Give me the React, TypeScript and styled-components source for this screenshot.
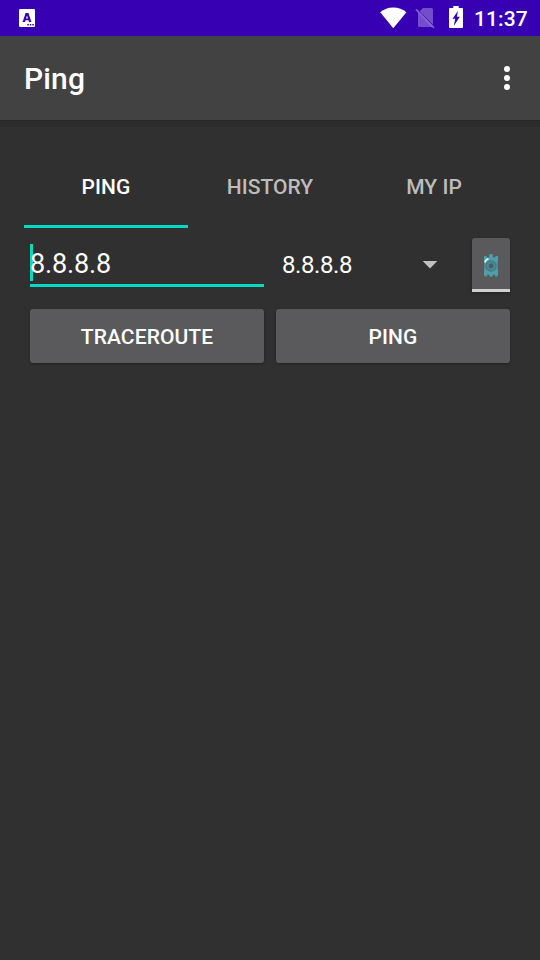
import React from "react";
import styled, { createGlobalStyle } from "styled-components";

const GlobalStyle = createGlobalStyle`
  * { box-sizing: border-box; }
  body { margin: 0; background: #303030; }
`;

const Screen = styled.div`
  display: flex;
  flex-direction: column;
  width: 540px;
  height: 960px;
  overflow: hidden;
  background: #303030;
  color: #fff;
  font-family: Roboto, sans-serif;
`;

const StatusBar = styled.header`
  display: flex;
  align-items: center;
  justify-content: space-between;
  height: 36px;
  padding: 0 12px 0 19px;
  background: #3700b3;
`;

const StatusIcons = styled.div`
  display: flex;
  align-items: center;
  height: 36px;
`;

const Clock = styled.span`
  width: 54px;
  margin-left: 11px;
  font-size: 21px;
  font-weight: 500;
  letter-spacing: 0.1px;
  line-height: 36px;
  padding-top: 1px;
  white-space: nowrap;
`;

const AppBar = styled.div`
  display: flex;
  flex: none;
  align-items: center;
  justify-content: space-between;
  height: 84px;
  padding: 0 30px 0 24px;
  background: #424242;
  box-shadow: 0 1px 0 #272727, 0 7px 0 #2c2c2c;
`;

const Title = styled.h1`
  margin: 0;
  padding-top: 2px;
  font-size: 30px;
  font-weight: 500;
  letter-spacing: 0.15px;
  line-height: 36px;
`;

const IconButton = styled.button`
  display: flex;
  padding: 0;
  border: 0;
  background: none;
`;

const Content = styled.main`
  padding: 24px;
`;

const Tabs = styled.nav`
  display: grid;
  grid-template-columns: repeat(3, 1fr);
`;

const Tab = styled.button<{ $active?: boolean }>`
  height: 84px;
  padding: 5px 0 0;
  border: 0;
  border-bottom: 3px solid ${(p) => (p.$active ? "#03dac5" : "transparent")};
  background: none;
  color: ${(p) => (p.$active ? "#fff" : "#bcbcbc")};
  font: 500 21px/24px Roboto, sans-serif;
  letter-spacing: 0.05px;
`;

const HostRow = styled.div`
  display: flex;
  align-items: flex-start;
  padding: 10px 6px 0;
  height: 75px;
`;

const HostField = styled.div`
  display: flex;
  width: 234px;
  height: 49px;
  padding-top: 6px;
  border-bottom: 3px solid #03dac5;
  font-size: 27px;
  letter-spacing: -0.15px;
  line-height: 40px;
`;

const Caret = styled.span`
  width: 3px;
  height: 37px;
  margin-right: -3px;
  background: #03dac5;
`;

const HostSelect = styled.div`
  display: flex;
  align-items: center;
  justify-content: space-between;
  width: 156px;
  height: 54px;
  margin-left: 18px;
  font-size: 24px;
  letter-spacing: -0.4px;
`;

const GearToggle = styled.button`
  display: flex;
  align-items: center;
  justify-content: center;
  width: 38px;
  height: 54px;
  margin-left: 34px;
  padding: 2px 0 0;
  border: 0;
  background:
    linear-gradient(#d0d0d0, #d0d0d0) bottom / 100% 3px no-repeat,
    #5a5a5c;
  border-radius: 3px 3px 0 0;
  box-shadow: 0 1px 3px rgba(0, 0, 0, 0.3);
`;

const Actions = styled.div`
  display: grid;
  grid-template-columns: 1fr 1fr;
  gap: 12px;
  padding: 6px 6px 0;
`;

const ActionButton = styled.button`
  height: 54px;
  padding: 2px 0 0;
  border: 0;
  border-radius: 3px;
  background: #5a5a5c;
  box-shadow: 0 1px 3px rgba(0, 0, 0, 0.3);
  color: #fff;
  font: 500 21px/24px Roboto, sans-serif;
  letter-spacing: 0.1px;
`;

const SimSlot = styled.span`
  display: flex;
  margin: 0 14px 0 8px;
`;

const BatterySlot = styled.span`
  display: flex;
  margin-bottom: 2px;
`;

const KeyboardIcon = () => (
  <svg width="16" height="18" viewBox="0 0 16 18">
    <rect width="16" height="18" rx="1.2" fill="#fff" />
    <path
      fillRule="evenodd"
      fill="#3700b3"
      d="M6.6 4h2.800l3 9H10l-.5-1.700h-3L6 13H3.600zM8 6.500 7 9.600h2z"
    />
    <path fill="#3700b3" d="M8.300 15h1.500v1.500H8.300zM10.800 15h1.500v1.500h-1.500zM13.300 15h1.500v1.500h-1.500z" />
  </svg>
);

const WifiIcon = () => (
  <svg width="27" height="22" viewBox="0 0 27 22">
    <path fill="#fff" d="M.2 5.200C3.700 2.200 8.300 .5 13.300 .5s9.600 1.700 13.100 4.700L13.300 21.300z" />
  </svg>
);

const NoSimIcon = () => (
  <svg width="20" height="22" viewBox="0 0 20 22">
    <path fill="#fff" opacity=".3" d="M8 1h8.500Q18 1 18 2.500v15.300L4.600 4.200z M3 5.400 17.300 19.800q-.4.200-.8.200h-12Q3 20 3 18.500z" />
    <path stroke="#fff" opacity=".36" strokeWidth="1.800" d="M1 2.300 19 20.800" />
  </svg>
);

const BatteryIcon = () => (
  <svg width="14" height="22" viewBox="0 0 14 22">
    <path
      fillRule="evenodd"
      fill="#fff"
      d="M4.300 0h5.400v2H13q1 0 1 1v18q0 1-1 1H1q-1 0-1-1V3q0-1 1-1h3.300zM8.900 5 3.500 12.800h2.700L4.800 20l6-9.200H7.900z"
    />
  </svg>
);

const OverflowIcon = () => (
  <svg width="6" height="24" viewBox="0 0 6 24">
    <circle cx="3" cy="3" r="3" fill="#fff" />
    <circle cx="3" cy="12" r="3" fill="#fff" />
    <circle cx="3" cy="21" r="3" fill="#fff" />
  </svg>
);

const ArrowIcon = () => (
  <svg width="16" height="8" viewBox="0 0 16 8">
    <path fill="#c1c1c1" d="M.7 0h14.600L8 7.500z" />
  </svg>
);

const GearIcon = () => (
  <svg width="14" height="24" viewBox="0 0 14 24">
    <path
      fill="#509eaa"
      d="M0 2 1.500 1.800 3.500 3.500H5V.8L6 0h2l.8.8v2.700h1.700L12.500 1.800 14 2V7l-.4 2v6l.4 2v4l-1 1.500h-1.500l-1-2H9v1l-1 1H6l-1-1v-1H3.500l-1 2H1l-1-1.500v-4l.4-2V9L0 7z"
    />
    <circle cx="7" cy="12" r="5.800" fill="#407f89" />
    <circle cx="7" cy="12" r="4.300" fill="#4a8993" />
    <circle cx="7" cy="12" r="2.400" fill="#505b62" />
    <path d="M.8 8.500Q1.500 5.500 4.500 4.700" fill="none" stroke="#e4f1f3" strokeWidth="1.500" />
  </svg>
);

export default function App() {
  return (
    <Screen>
      <GlobalStyle />
      <StatusBar>
        <KeyboardIcon />
        <StatusIcons>
          <WifiIcon />
          <SimSlot>
            <NoSimIcon />
          </SimSlot>
          <BatterySlot>
            <BatteryIcon />
          </BatterySlot>
          <Clock>11:37</Clock>
        </StatusIcons>
      </StatusBar>
      <AppBar>
        <Title>Ping</Title>
        <IconButton aria-label="More options">
          <OverflowIcon />
        </IconButton>
      </AppBar>
      <Content>
        <Tabs>
          <Tab $active>PING</Tab>
          <Tab>HISTORY</Tab>
          <Tab>MY IP</Tab>
        </Tabs>
        <HostRow>
          <HostField>
            <Caret />
            8.8.8.8
          </HostField>
          <HostSelect>
            8.8.8.8
            <ArrowIcon />
          </HostSelect>
          <GearToggle aria-label="Settings">
            <GearIcon />
          </GearToggle>
        </HostRow>
        <Actions>
          <ActionButton>TRACEROUTE</ActionButton>
          <ActionButton>PING</ActionButton>
        </Actions>
      </Content>
    </Screen>
  );
}
